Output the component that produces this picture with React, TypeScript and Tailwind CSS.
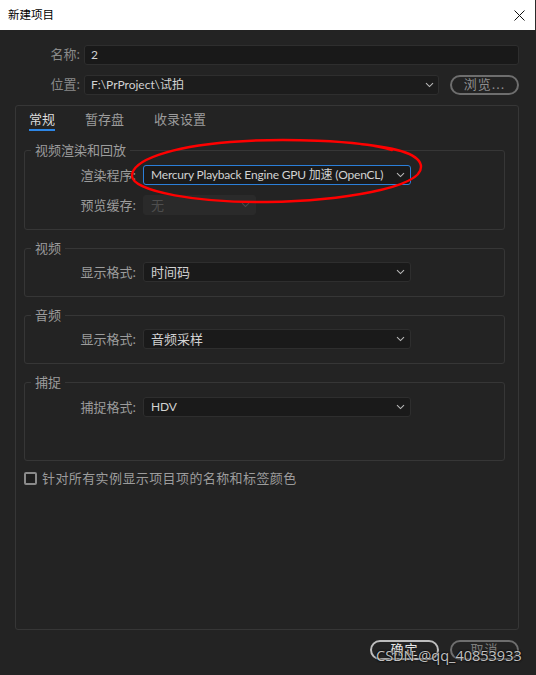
import type { ReactNode } from 'react'

const font = { fontFamily: '"Noto Sans", "Noto Sans CJK SC", sans-serif' }
const latin = { fontFamily: 'Lato, "Noto Sans CJK SC", sans-serif' }

function Chevron({ dim }: { dim?: boolean }) {
  return (
    <svg width="9" height="6" viewBox="0 0 9 6" className={dim ? 'text-[#4a4a4a]' : 'text-[#b8b8b8]'}>
      <path d="M1 1.2 L4.5 4.6 L8 1.2" fill="none" stroke="currentColor" strokeWidth="1.1" />
    </svg>
  )
}

function Select({ value, width, active, disabled, cjk }: { value: string; width: string; active?: boolean; disabled?: boolean; cjk?: boolean }) {
  return (
    <div
      className={
        'ml-[3px] flex h-[20px] items-center justify-between whitespace-nowrap rounded-[3px] pl-[7px] pr-[5px] ' +
        (cjk ? 'text-[13px] ' : 'text-[12px] tracking-[-0.2px] ') +
        width +
        (active
          ? ' border border-[#2b7fd9] bg-[#1a1a1a] text-[#d2d2d2]'
          : disabled
          ? ' border border-[#2a2a2a] bg-[#2a2a2a] text-[#4e4e4e]'
          : ' border border-[#2e2e2e] bg-[#1a1a1a] text-[#d2d2d2]')
      }
      style={latin}
    >
      <span className="leading-none">{value}</span>
      <Chevron dim={disabled} />
    </div>
  )
}

function Row({ label, children }: { label: string; children: ReactNode }) {
  return (
    <div className="flex items-center">
      <div className="w-[115px] pr-[4px] text-right text-[13px] leading-4 text-[#9c9c9c]">{label}</div>
      {children}
    </div>
  )
}

function Group({ title, className, children }: { title: string; className: string; children: ReactNode }) {
  return (
    <fieldset className={'ml-[8px] mr-[13px] rounded-[3px] border border-[#363636] ' + className}>
      <legend className="ml-[6px] px-[4px] text-[13px] leading-4 text-[#9c9c9c]">{title}</legend>
      {children}
    </fieldset>
  )
}

export default function App() {
  return (
    <div className="relative flex h-[675px] w-[536px] flex-col overflow-hidden bg-[#232323]" style={font}>
      {/* title bar */}
      <div className="flex h-[30px] items-center justify-between border-r border-[#2b2b2b] bg-white pl-[8px] pr-[10px]">
        <span className="text-[11.5px] text-black" style={{ fontFamily: '"Noto Sans CJK SC", sans-serif' }}>新建项目</span>
        <svg width="11" height="11" viewBox="0 0 11 11">
          <path d="M0.5 0.5 L10.5 10.5 M10.5 0.5 L0.5 10.5" stroke="#111" strokeWidth="1" />
        </svg>
      </div>

      <div className="flex flex-1 flex-col pl-[15px] pr-[17px] pt-[15px] pb-[15px]">
        <div className="flex items-center">
          <div className="w-[65px] text-right text-[13px] text-[#8a8a8a]">名称:</div>
          <div className="ml-[4px] flex h-[20px] flex-1 items-center rounded-[3px] border border-[#2e2e2e] bg-[#191919] pl-[6px] text-[12px] text-[#d2d2d2]" style={latin}>2</div>
        </div>
        <div className="mt-[10px] flex items-center">
          <div className="w-[65px] text-right text-[13px] text-[#8a8a8a]">位置:</div>
          <div className="ml-[4px] flex h-[20px] w-[355px] items-center justify-between rounded-[3px] border border-[#2e2e2e] bg-[#1c1c1c] pl-[6px] pr-[4px] text-[12px] text-[#d2d2d2]" style={latin}>
            <span>F:\PrProject\试拍</span>
            <Chevron />
          </div>
          <div className="ml-[11px] flex h-[20px] flex-1 items-center justify-center rounded-full border-2 border-[#6e6e6e] text-[13px] tracking-[1px] text-[#8e8e8e]">
            浏览...
          </div>
        </div>

        {/* main panel */}
        <div className="mt-[10px] flex flex-1 flex-col rounded-[3px] border border-[#363636]">
          <div className="flex gap-[30px] pl-[13px] pt-[5px] text-[13px] leading-4">
            <div className="flex flex-col">
              <span className="text-[#dcdcdc]">常规</span>
              <span className="mt-[2px] h-[2px] bg-[#2d86e6]" />
            </div>
            <span className="text-[#9c9c9c]">暂存盘</span>
            <span className="text-[#9c9c9c]">收录设置</span>
          </div>

          <Group title="视频渲染和回放" className="mt-[11px] pt-[7px] pb-[14px]">
            <Row label="渲染程序:">
              <Select value="Mercury Playback Engine GPU 加速 (OpenCL)" width="w-[268px]" active />
            </Row>
            <div className="mt-[10px]">
              <Row label="预览缓存:">
                <Select value="无" width="w-[113px]" disabled cjk />
              </Row>
            </div>
          </Group>

          <Group title="视频" className="mt-[10px] pt-[6px] pb-[14px]">
            <Row label="显示格式:">
              <Select value="时间码" width="w-[268px]" cjk />
            </Row>
          </Group>

          <Group title="音频" className="mt-[10px] pt-[6px] pb-[14px]">
            <Row label="显示格式:">
              <Select value="音频采样" width="w-[268px]" cjk />
            </Row>
          </Group>

          <Group title="捕捉" className="mt-[10px] pt-[7px] pb-[43px]">
            <Row label="捕捉格式:">
              <Select value="HDV" width="w-[268px]" />
            </Row>
          </Group>

          <div className="ml-[8px] mt-[9px] flex items-center gap-[5px]">
            <span className="h-[13px] w-[13px] rounded-[2px] border-2 border-[#8a8a8a] bg-[#1e1e1e]" />
            <span className="text-[13px] leading-4 tracking-[0.4px] text-[#9c9c9c]">针对所有实例显示项目项的名称和标签颜色</span>
          </div>
        </div>

        <div className="mt-[10px] flex justify-end gap-[11px]">
          <div className="flex h-[20px] w-[69px] items-center justify-center rounded-full border-2 border-[#bdbdbd] text-[13px] tracking-[1px] text-[#e8e8e8]">确定</div>
          <div className="flex h-[20px] w-[69px] items-center justify-center rounded-full border-2 border-[#6e6e6e] text-[13px] tracking-[1px] text-[#7e7e7e]">取消</div>
        </div>
      </div>

      {/* hand-drawn red annotation */}
      <svg className="pointer-events-none absolute left-0 top-0" width="536" height="675">
        <path
          d="M392 150 C 360 140, 280 138, 230 142 C 170 147, 132 160, 132 176 C 133 192, 200 203, 267 202 C 340 201, 421 188, 421 167 C 421 155, 400 148, 360 144"
          fill="none"
          stroke="#ff0000"
          strokeWidth="2.4"
          strokeLinecap="round"
        />
      </svg>

      {/* watermark */}
      <div
        className="pointer-events-none absolute left-[376px] top-[645px] whitespace-nowrap text-[14.5px] text-white/75"
        style={{ fontFamily: '"Open Sans", sans-serif', textShadow: '0 0 2px #000, 0 0 2px #000' }}
      >
        CSDN @qq_40853933
      </div>
    </div>
  )
}
